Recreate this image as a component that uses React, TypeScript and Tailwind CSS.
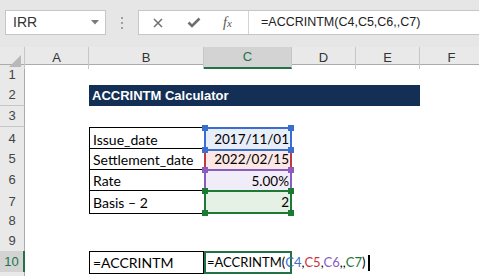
import React from 'react';

const cols = 'grid grid-cols-[25px_64px_115px_88px_64px_64px_64px]';

const RowHead: React.FC<{ n?: number; active?: boolean }> = ({ n, active }) => (
  <div
    className={
      active
        ? 'flex items-center justify-center bg-[#d3d3d3] text-[#217346] border-b border-[#c6c6c6] border-r-2 border-r-[#217346] text-[13px]'
        : 'flex items-center justify-center bg-[#e9e9e9] text-[#444] border-b border-[#c6c6c6] border-r border-r-[#ababab] text-[13px]'
    }
    style={{ fontFamily: '"Liberation Sans", Arial, sans-serif' }}
  >
    {n}
  </div>
);

const Handle: React.FC<{ color: string; pos: string }> = ({ color, pos }) => (
  <span className={`absolute w-[6px] h-[6px] z-20 ${pos}`} style={{ backgroundColor: color }} />
);

const Empty: React.FC<{ n?: number }> = ({ n = 1 }) => (
  <>
    {Array.from({ length: n }).map((_, i) => (
      <div key={i} />
    ))}
  </>
);

export default function App() {
  const blue = '#3b6fce';
  const red = '#c8363e';
  const purple = '#8a5cc0';
  const green = '#1c7a34';

  return (
    <div
      className="w-[479px] h-[276px] overflow-hidden bg-white text-black"
      style={{ fontFamily: 'Lato, "Liberation Sans", Arial, sans-serif' }}
    >
      {/* formula bar area */}
      <div
        className="h-[47px] bg-[#e6e6e6] flex items-start pt-[10px] pl-[5px]"
        style={{ fontFamily: '"Liberation Sans", Arial, sans-serif' }}
      >
        <div className="w-[101px] h-[25px] bg-white border border-[#c6c6c6] flex items-center justify-between pl-[7px] pr-[6px]">
          <span className="text-[14px] text-[#333]">IRR</span>
          <svg width="8" height="5" viewBox="0 0 8 5">
            <polygon points="0,0 8,0 4,4.5" fill="#7a7a7a" />
          </svg>
        </div>
        <div className="w-[32px] h-[25px] flex flex-col items-center justify-center gap-[3px]">
          <span className="w-[2px] h-[2px] bg-[#a0a0a0]" />
          <span className="w-[2px] h-[2px] bg-[#a0a0a0]" />
          <span className="w-[2px] h-[2px] bg-[#a0a0a0]" />
        </div>
        <div className="flex-1 h-[25px] bg-white border border-[#c6c6c6] border-r-0 flex">
          <div className="w-[110px] h-full flex items-center border-r border-[#d4d4d4]">
            <svg className="ml-[14px]" width="10" height="10" viewBox="0 0 10 10">
              <path d="M1 1 L9 9 M9 1 L1 9" stroke="#6f6f6f" strokeWidth="1.5" />
            </svg>
            <svg className="ml-[24px]" width="14" height="11" viewBox="0 0 14 11">
              <path d="M1.5 5.5 L5 9 L12.5 1.5" stroke="#6f6f6f" strokeWidth="2.6" fill="none" />
            </svg>
            <span
              className="ml-[22px] text-[14px] italic text-[#555]"
              style={{ fontFamily: '"Liberation Serif", "Times New Roman", serif' }}
            >
              f<span className="text-[11px]">x</span>
            </span>
          </div>
          <div className="flex items-center pl-[12px] text-[12.5px] text-[#222] whitespace-nowrap">
            =ACCRINTM(C4,C5,C6,,C7)
          </div>
        </div>
      </div>

      {/* column headers */}
      <div
        className={`${cols} h-[18px] bg-[#e9e9e9] text-[13px] text-[#333] border-b border-[#ababab]`}
        style={{ fontFamily: '"Liberation Sans", Arial, sans-serif' }}
      >
        <div className="relative border-r border-[#c6c6c6]">
          <svg className="absolute right-[3px] bottom-[2px]" width="12" height="12" viewBox="0 0 12 12">
            <polygon points="12,0 12,12 0,12" fill="#b8b8b8" />
          </svg>
        </div>
        <div className="flex items-center justify-center border-r border-[#c6c6c6]">A</div>
        <div className="flex items-center justify-center border-r border-[#c6c6c6]">B</div>
        <div className="flex items-center justify-center bg-[#d3d3d3] text-[#217346] border-r border-[#c6c6c6] border-b-2 border-b-[#217346]">
          C
        </div>
        <div className="flex items-center justify-center border-r border-[#c6c6c6]">D</div>
        <div className="flex items-center justify-center border-r border-[#c6c6c6]">E</div>
        <div className="flex items-center justify-center border-r border-[#c6c6c6]">F</div>
      </div>

      {/* row 1 */}
      <div className={`${cols} h-[20px]`}>
        <RowHead n={1} />
        <Empty n={6} />
      </div>

      {/* row 2 */}
      <div className={`${cols} h-[21px]`}>
        <RowHead n={2} />
        <div />
        <div
          className="col-span-4 bg-[#132f56] text-white font-bold text-[13px] flex items-center pl-[3px]"
          style={{ fontFamily: '"Liberation Sans", Arial, sans-serif' }}
        >
          ACCRINTM Calculator
        </div>
        <div />
      </div>

      {/* row 3 */}
      <div className={`${cols} h-[21px]`}>
        <RowHead n={3} />
        <Empty n={6} />
      </div>

      {/* row 4 */}
      <div className={`${cols} h-[21px]`}>
        <RowHead n={4} />
        <div />
        <div className="border-l border-t border-black flex items-center pl-[3px] text-[14px]">Issue_date</div>
        <div className="relative bg-[#e8eef9] border-2 flex items-center justify-end pr-[1px] text-[13.5px]" style={{ borderColor: blue }}>
          2017/11/01
          <Handle color={blue} pos="-left-[4px] -top-[4px]" />
          <Handle color={blue} pos="-right-[4px] -top-[4px]" />
          <Handle color={blue} pos="-left-[4px] -bottom-[4px]" />
          <Handle color={blue} pos="-right-[4px] -bottom-[4px]" />
        </div>
        <Empty n={3} />
      </div>

      {/* row 5 */}
      <div className={`${cols} h-[21px]`}>
        <RowHead n={5} />
        <div />
        <div className="border-l border-t border-black flex items-center pl-[3px] text-[14px]">Settlement_date</div>
        <div className="bg-[#fbe8e6] border-x-2 flex items-center justify-end pr-[1px] text-[13.5px]" style={{ borderColor: red }}>
          2022/02/15
        </div>
        <Empty n={3} />
      </div>

      {/* row 6 */}
      <div className={`${cols} h-[21px]`}>
        <RowHead n={6} />
        <div />
        <div className="border-l border-t border-black flex items-center pl-[3px] text-[14px]">Rate</div>
        <div className="relative bg-[#f1edf8] border-x-2 border-t-2 flex items-center justify-end pr-[1px] text-[13.5px]" style={{ borderColor: purple }}>
          5.00%
          <Handle color={purple} pos="-left-[4px] -top-[4px]" />
          <Handle color={purple} pos="-right-[4px] -top-[4px]" />
        </div>
        <Empty n={3} />
      </div>

      {/* row 7 */}
      <div className={`${cols} h-[21px]`}>
        <RowHead n={7} />
        <div />
        <div className="border-l border-y border-black flex items-center pl-[3px] text-[14px]">Basis – 2</div>
        <div className="relative bg-[#e4f1e4] border-2 flex items-center justify-end pr-[1px] text-[13.5px]" style={{ borderColor: green }}>
          2
          <Handle color={green} pos="-left-[4px] -top-[4px]" />
          <Handle color={green} pos="-right-[4px] -top-[4px]" />
          <Handle color={green} pos="-left-[4px] -bottom-[4px]" />
          <Handle color={green} pos="-right-[4px] -bottom-[4px]" />
        </div>
        <Empty n={3} />
      </div>

      {/* rows 8, 9 */}
      <div className={`${cols} h-[20px]`}>
        <RowHead n={8} />
        <Empty n={6} />
      </div>
      <div className={`${cols} h-[20px]`}>
        <RowHead n={9} />
        <Empty n={6} />
      </div>

      {/* row 10 */}
      <div className={`${cols} h-[21px]`}>
        <RowHead n={10} active />
        <div />
        <div className="border border-black flex items-center pl-[3px] text-[14px]">=ACCRINTM</div>
        <div className="relative border-2 border-[#217346]">
          <div className="absolute left-[1px] top-0 h-full flex items-center whitespace-nowrap text-[13px] z-10">
            =ACCRINTM(
            <span style={{ color: blue }}>C4</span>,
            <span style={{ color: red }}>C5</span>,
            <span style={{ color: purple }}>C6</span>,,
            <span style={{ color: green }}>C7</span>)
            <span className="ml-[3px] w-[2px] h-[16px] bg-black" />
          </div>
        </div>
        <Empty n={3} />
      </div>

      {/* row 11 (cut off) */}
      <div className={`${cols} h-[20px]`}>
        <RowHead />
        <Empty n={6} />
      </div>
    </div>
  );
}
